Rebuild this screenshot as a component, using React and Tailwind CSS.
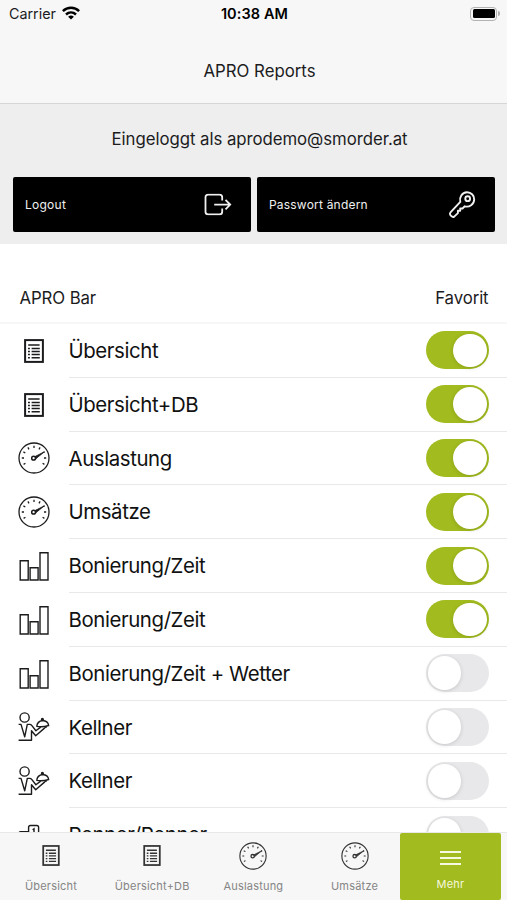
import React from 'react';

const ListIcon = ({ className }) => (
  <svg viewBox="0 0 20 24" className={className} fill="none" stroke="currentColor">
    <rect x="1.1" y="1.1" width="17.8" height="21.8" strokeWidth="2" />
    <path d="M4.2 6h11.4M7.6 9.4h8.2M7.6 12.5h8.2M7.6 15.6h8.2M7.6 18.7h8.2" strokeWidth="1.5" />
    <path d="M4 9.4h1.9M4 12.5h1.9M4 15.6h1.9M4 18.7h1.9" strokeWidth="1.5" />
  </svg>
);

const GaugeIcon = ({ className }) => (
  <svg viewBox="0 0 32 32" className={className} fill="none" stroke="currentColor">
    <circle cx="16" cy="16" r="15" strokeWidth="1.3" />
    <path
      d="M3.8 16h2.2M26 16h2.2M16 3.8v2.2M5.4 9.9l1.9 1.1M9.9 5.4l1.1 1.9M22.1 5.4l-1.1 1.9M26.6 9.9l-1.4 .8M5.6 22.4l1.8-1.1M26.4 22.4l-1.8-1.1"
      strokeWidth="1.3"
    />
    <circle cx="15.6" cy="16.2" r="1.9" strokeWidth="1.5" />
    <path d="M17 14.6L26.2 9.9L18 16.6Z" fill="currentColor" strokeWidth="0.9" />
  </svg>
);

const BarsIcon = ({ className }) => (
  <svg viewBox="0 0 30 30" className={className} fill="none" stroke="currentColor" strokeWidth="1.4">
    <path d="M1.2 9.2h8v19.3h-8zM11.1 16.2h8v12.3h-8zM21 1.2h8v27.3h-8z" />
  </svg>
);

const WaiterIcon = ({ className }) => (
  <svg viewBox="0 0 32 30" className={className} fill="none" stroke="currentColor" strokeWidth="1.4" strokeLinejoin="round">
    <circle cx="6.6" cy="6" r="4.6" />
    <path d="M.6 12.9h2.4l3.7 12.4 2.6-12.4h2.4q1.2 0 2 1l4.2 5.3 4.8-3.6" />
    <path d="M.6 28.7h12.9v-9.4l4.2 4.9 8.8-7.6q1-1 2.5-1.2" />
    <path d="M18.8 14.9c.2-3.1 2.6-5.4 5.9-5.9 3 .2 5.5 2.1 6 5q-6 1.8-11.9.9z" />
    <circle cx="24.4" cy="7.9" r=".9" fill="currentColor" />
  </svg>
);

const PodiumIcon = ({ className }) => (
  <svg viewBox="0 0 32 30" className={className} fill="none" stroke="currentColor" strokeWidth="1.4">
    <path d="M1 28.5V9.5q0-1.8 1.8-1.8h7.8V3.3q0-1.8 1.8-1.8h6.4q1.8 0 1.8 1.8v9.2h8.4q1.8 0 1.8 1.8v14.2zM10.6 7.7v20.8M20.6 12.5v16" />
    <path d="M14.6 5.8l1.4-1v6" />
  </svg>
);

const LogoutIcon = () => (
  <svg viewBox="0 0 28 22" className="h-[22px] w-[28px] translate-y-[0.5px]" fill="none" stroke="currentColor" strokeWidth="1.8">
    <path d="M18.2 7V3.8Q18.2 1.2 15.6 1.2H4.1Q1.5 1.2 1.5 3.8V18.2Q1.5 20.8 4.1 20.8H15.6Q18.2 20.8 18.2 18.2V15" />
    <path d="M10.2 11.1H26M21.5 6.4L26.2 11.1L21.5 15.8" />
  </svg>
);

const KeyIcon = () => (
  <svg viewBox="0 0 28 28" className="h-[28px] w-[28px] translate-y-[0.5px]" fill="none" stroke="currentColor" strokeWidth="1.9" strokeLinejoin="round">
    <path d="M12.3 11.4C11 6.8 14 1.9 19 1.8C23.5 1.8 26.3 5.3 26.2 9C26 14 21.3 17 16.8 15.8L14.5 18H12.2V20.3H9.9V22.6L6.2 26.1Q4.7 27 3.4 25.7L2.4 24.7Q1.3 23.3 2.5 21.9Z" />
    <circle cx="19.7" cy="8.2" r="2.4" />
  </svg>
);

const WifiIcon = () => (
  <svg viewBox="0 0 18 14" className="h-[14px] w-[18px] translate-y-[-1px]" fill="none" stroke="#000" strokeWidth="2.5">
    <path d="M.9 5.1C5.4 .7 12.6 .7 17.1 5.1" />
    <path d="M4 8.5C6.9 5.8 11.1 5.8 14 8.5" />
    <path d="M9 13.6L6.1 10.8Q9 8.4 11.9 10.8Z" fill="#000" stroke="none" />
  </svg>
);

const Toggle = ({ on }) => (
  <div className={`flex h-[38px] w-[62.5px] items-center rounded-full px-[1.8px] ${on ? 'justify-end bg-[#a2bb1e]' : 'justify-start bg-[#e8e8ea]'}`}>
    <div className="size-[33.6px] rounded-full bg-white shadow-[0_1px_4px_rgba(0,0,0,0.14)]" />
  </div>
);

const rows = [
  { label: 'Übersicht', kind: 'list', on: true },
  { label: 'Übersicht+DB', kind: 'list', on: true },
  { label: 'Auslastung', kind: 'gauge', on: true },
  { label: 'Umsätze', kind: 'gauge', on: true },
  { label: 'Bonierung/Zeit', kind: 'bars', on: true },
  { label: 'Bonierung/Zeit', kind: 'bars', on: true },
  { label: 'Bonierung/Zeit + Wetter', kind: 'bars', on: false },
  { label: 'Kellner', kind: 'waiter', on: false },
  { label: 'Kellner', kind: 'waiter', on: false },
  { label: 'Renner/Penner', kind: 'podium', on: false },
];

const rowIcons = {
  list: <ListIcon className="h-[24px] w-[20px]" />,
  gauge: <GaugeIcon className="size-[32px]" />,
  bars: <BarsIcon className="size-[30px] translate-y-[0.5px]" />,
  waiter: <WaiterIcon className="h-[30px] w-[32px] translate-y-[-0.5px]" />,
  podium: <PodiumIcon className="h-[30px] w-[32px] translate-y-[4px]" />,
};

const tabs = [
  { label: 'Übersicht', kind: 'list' },
  { label: 'Übersicht+DB', kind: 'list' },
  { label: 'Auslastung', kind: 'gauge' },
  { label: 'Umsätze', kind: 'gauge' },
];

export default function App() {
  return (
    <div className="flex h-[900px] w-[507px] flex-col overflow-hidden bg-white font-[Inter,'Liberation_Sans',sans-serif] text-[#1c1c1e]">
      <header className="flex h-[103.5px] shrink-0 flex-col border-b border-[#d6d6d6] bg-[#f7f7f7]">
        <div className="grid h-[27px] grid-cols-[1fr_auto_1fr] items-center pl-[9px] pr-[7px]">
          <div className="flex items-center gap-[6px] text-[14.3px]">
            Carrier <WifiIcon />
          </div>
          <div className="whitespace-nowrap text-[14.5px] font-semibold tracking-[0.1px] text-black">10:38 AM</div>
          <div className="flex items-center justify-end gap-[1px]">
            <div className="flex h-[14px] w-[27px] items-center justify-center rounded-[4px] border-[1.5px] border-[#b2b2b2]">
              <div className="h-[9px] w-[22px] rounded-[1.5px] bg-black" />
            </div>
            <div className="h-[5px] w-[2px] rounded-r-full bg-[#b2b2b2]" />
          </div>
        </div>
        <h1 className="mt-[32px] translate-x-[6px] text-center text-[16.8px] leading-[24px]">APRO Reports</h1>
      </header>

      <section className="flex h-[140.5px] shrink-0 flex-col bg-[#eeeeee]">
        <p className="mt-[23px] translate-x-[6px] text-center text-[16.8px] leading-[24px] tracking-[-0.05px]">Eingeloggt als aprodemo@smorder.at</p>
        <div className="mt-[26px] flex gap-[6px] pl-[13px] pr-[12px] text-[#f0f0f0]">
          <button className="flex h-[55px] w-[238px] items-center justify-between rounded-[2px] bg-black pl-[12px] pr-[19px] text-[12px] tracking-[0.25px]">
            <span className="translate-y-[0.5px]">Logout</span> <LogoutIcon />
          </button>
          <button className="flex h-[55px] w-[238px] items-center justify-between rounded-[2px] bg-black pl-[12px] pr-[19px] text-[12px] tracking-[0.2px]">
            <span className="translate-y-[0.5px]">Passwort ändern</span> <KeyIcon />
          </button>
        </div>
      </section>

      <div className="flex h-[80px] shrink-0 items-end justify-between border-b-2 border-[#f7f7f7] pb-[12px] pl-[19.5px] pr-[18.5px] text-[16.8px] leading-[24px] tracking-[-0.1px]">
        <span>APRO Bar</span>
        <span>Favorit</span>
      </div>

      <main className="min-h-0 flex-1 overflow-hidden">
        {rows.map((row, i) => (
          <div key={i} className="flex h-[53.8px]">
            <div className="flex w-[68.5px] shrink-0 items-center justify-center">{rowIcons[row.kind]}</div>
            <div className="flex flex-1 items-center justify-between border-b border-[#e9e9ea] pr-[18.5px]">
              <span className="translate-y-[1px] whitespace-nowrap text-[20.4px] tracking-[-0.4px] text-[#111]">{row.label}</span>
              <Toggle on={row.on} />
            </div>
          </div>
        ))}
      </main>

      <nav className="flex h-[68px] shrink-0 border-t border-[#e8e8e8] bg-[#f7f7f7] pl-[5.5px]">
        {tabs.map((tab) => (
          <div key={tab.label} className="mr-[10.2px] flex w-[91px] shrink-0 flex-col items-center text-[#858585] nth-4:mr-0">
            <div className="flex h-[45px] items-center text-[#333]">
              {tab.kind === 'list' ? <ListIcon className="h-[21px] w-[18px]" /> : <GaugeIcon className="size-[28px]" />}
            </div>
            <span className="whitespace-nowrap text-[11px] leading-[16px] tracking-[0.2px]">{tab.label}</span>
          </div>
        ))}
        <div className="flex w-[100.8px] shrink-0 flex-col items-center rounded-[2px] bg-[#a2bb1e] text-white">
          <div className="mt-[18px] flex w-[21px] flex-col gap-[4px]">
            <div className="h-[2px] bg-[#f6f9e0]" />
            <div className="h-[2px] bg-[#f6f9e0]" />
            <div className="h-[2px] bg-[#f6f9e0]" />
          </div>
          <span className="mt-[11px] text-[11px] leading-[16px] tracking-[0.2px] text-[#f4f7de]">Mehr</span>
        </div>
      </nav>
    </div>
  );
}
